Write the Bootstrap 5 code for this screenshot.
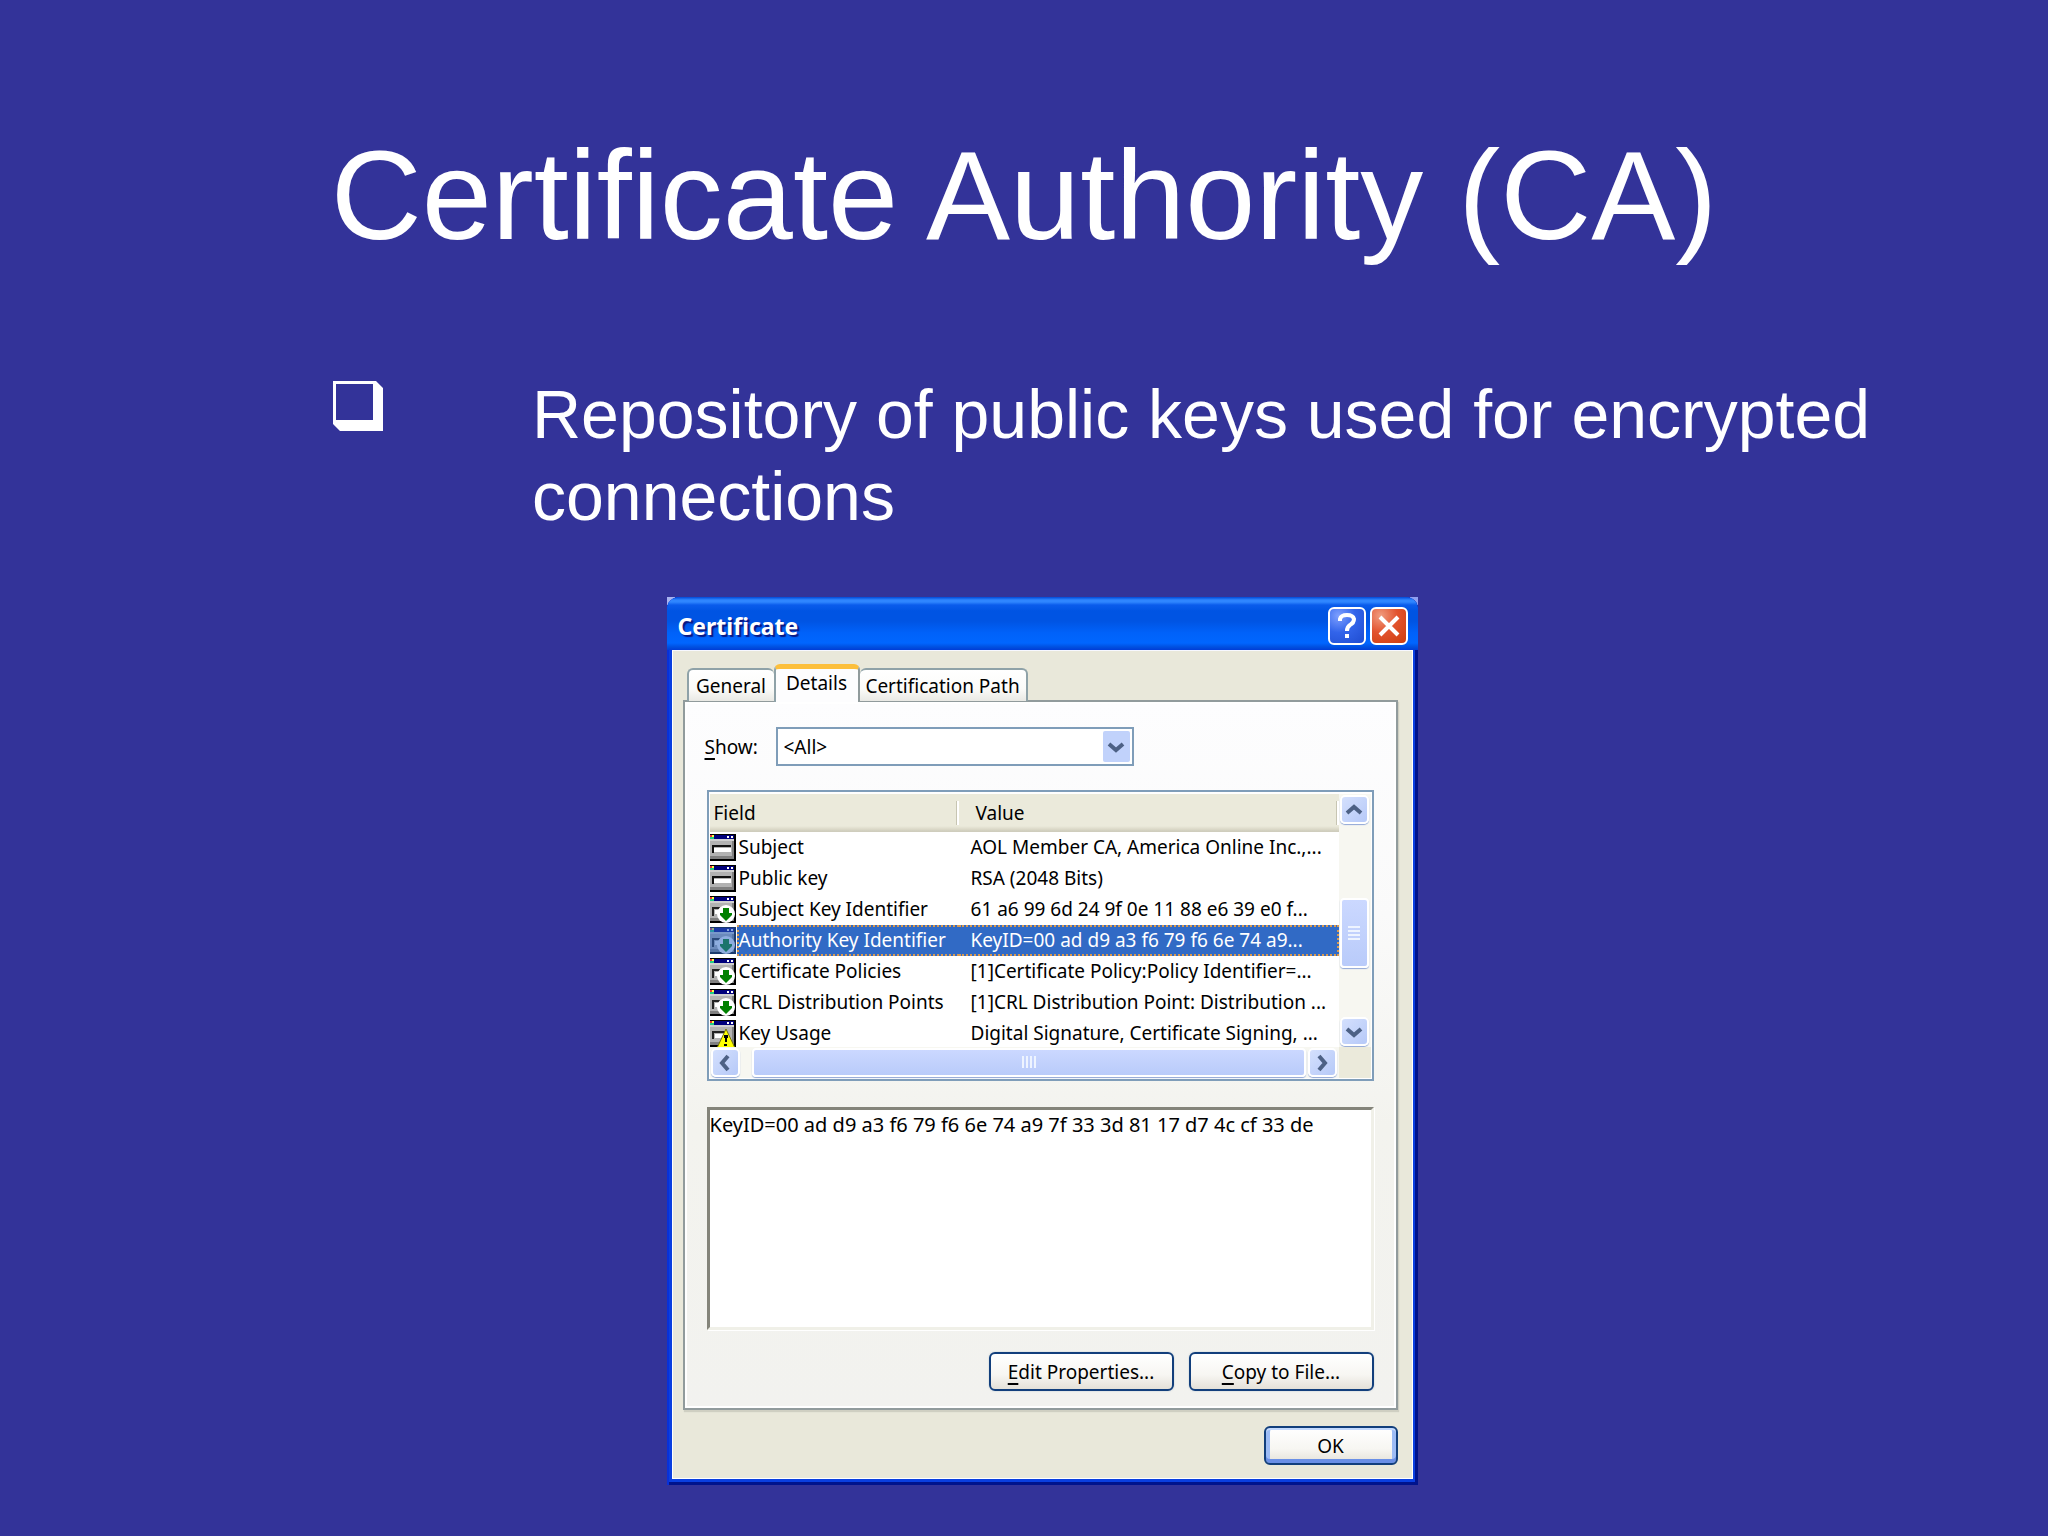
<!DOCTYPE html>
<html lang="en">
<head>
<meta charset="utf-8">
<meta name="viewport" content="width=device-width, initial-scale=1">
<title>Certificate Authority (CA)</title>
<link rel="stylesheet" href="https://cdn.jsdelivr.net/npm/bootstrap@5.3.0/dist/css/bootstrap.min.css">
<style>
body { background: #333399; color: #fff; font-family: "Liberation Sans", Arial, sans-serif; }
.slide { padding: 124px 120px 50px; }
.slide-title { font-size: 126px; line-height: 144px; font-weight: 400; margin-bottom: 105px; }
.slide-points { padding-left: 213px; font-size: 68px; line-height: 82px; margin-bottom: 60px; }
.point-mark { width: 199px; padding-top: 8px; line-height: 1; }
.dialog-area { padding-left: 36px; }

/* dialog frame */
.xp-window { width: 751px; background: #0a3fe0; border-radius: 12px 12px 0 0; padding: 0 5px 6px 5px; position: relative;
  box-shadow: inset 2px 0 #0831d9, inset -3px -3px #00138c; color: #000; font-family: "Noto Sans", Tahoma, sans-serif; font-size: 19px; line-height: 24px; }
.xp-window::before { content: ""; position: absolute; inset: 0 0 auto; height: 10px; z-index: -1;
  background: linear-gradient(#a9b4f0, #a9b4f0) 0 0 / 8px 8px no-repeat, linear-gradient(#8f9ff0, #8f9ff0) 100% 0 / 8px 8px no-repeat; }
.xp-titlebar { height: 53px; margin: 0 -5px; padding: 4px 10px 0 11px; border-radius: 12px 12px 0 0;
  background: linear-gradient(#0048d8 0, #2f86ff 3px, #2f86ff 5px, #0a5cec 8px, #0054e3 14px, #0054e3 24px, #0062fa 36px, #0066ff 46px, #0050e0 50px, #003dd7 53px); }
.xp-caption { font-family: "Noto Sans", "Trebuchet MS", sans-serif; font-size: 23px; font-weight: 700; color: #fff; text-shadow: 2px 2px 1px #0a1883; }
.xp-cap-btn { width: 38px; height: 38px; padding: 0; border: 2px solid #fff; border-radius: 6px; color: #fff; background: radial-gradient(circle at 25% 20%, #7ea0ff, #3264ea 45%, #1f4cd0); }
.xp-cap-btn.is-close { background: radial-gradient(circle at 25% 20%, #f09c80, #e2532e 45%, #cc3c0c); }
.xp-client { background: #e9e8da; border: 1px solid #fff; border-top-color: #f7f8ff; padding: 12px 14px 13px 10px; }

/* tabs */
.xp-tabs { padding-left: 4px; height: 38px; margin-bottom: -1px; position: relative; }
.xp-tab { height: 33px; border: 2px solid #8fa2a8; border-bottom: 0; border-radius: 6px 6px 0 0; background: linear-gradient(#fff, #fbfbf9 60%, #e9e9e4); padding: 0; color: #000; }
.xp-tab.tab-general { width: 87px; border-right: 0; }
.xp-tab.tab-details { width: 86px; height: 38px; border-top: 5px solid #fcbf3c; border-right-color: #919b9c; background: #fdfdfe; margin-bottom: -1px; padding-bottom: 5px; }
.xp-tab.tab-path { width: 168px; border-left: 0; }
.xp-panel { border: 2px solid #919b9c; box-shadow: inset 0 0 0 2px #fff, 1px 2px 1px #cfcfc2; background: linear-gradient(#fdfdfe, #fafafa 30%, #f3f3ee 60%, #f2f2ef); padding: 25px 22px 17px; }

.xp-show { width: 71px; margin-left: -2px; }
.xp-select-box { width: 358px; position: relative; }
.xp-select { width: 100%; height: 39px; border: 2px solid #7f9db9; border-radius: 0; background: #fff; color: #000; appearance: none; padding: 0 6px; }
.xp-select-box svg { position: absolute; right: 4px; top: 4px; pointer-events: none; }

/* field list */
.xp-list { border: 2px solid #7f9db9; background: #fff; margin-top: 24px; height: 291px; padding: 2px 1px 1px; }
.list-view { width: 629px; height: 253px; overflow: hidden; }
.field-table { width: 629px; table-layout: fixed; border-collapse: separate; border-spacing: 0; }
.field-table th { height: 38px; font-weight: 400; padding: 0 0 0 4px; background: linear-gradient(#ebeadb 32px, #dcdac9 35px, #cfcdbd 37px); position: relative; }
.field-table th::after { content: ""; position: absolute; right: 0; top: 7px; height: 24px; width: 3px; background: #c7c5b2; border-right: 2px solid #fff; }
.field-table th:last-child { padding-left: 17px; }
.field-table td { height: 31px; padding: 0 0 0 2px; white-space: nowrap; line-height: 27px; border: solid transparent; border-width: 2px 0; }
.field-table td:first-child { padding: 0; border: 0; }
.field-table td svg { display: block; }
.field-table td:last-child { padding-left: 12px; }
.field-table .is-selected td + td { background: #316ac5; color: #fff; border-color: #d89a50; border-style: dotted; }
.field-table .is-selected td:first-child + td { border-left-width: 2px; padding-left: 0; }
.field-table .is-selected td:last-child { border-right-width: 2px; }
.v-scroll { width: 32px; padding: 1px 0 1px 1px; background: #f7f7f1; }
.h-scroll { width: 629px; height: 31px; padding: 1px 2px 1px 1px; background: #f7f7f1; }
.scroll-corner { width: 32px; background: #ebeadb; }
.scroll-btn { width: 29px; height: 29px; padding: 0; border: 2px solid #fff; border-radius: 5px; background: linear-gradient(135deg, #d4e0fd, #b6c9f8); box-shadow: 0 1px 1px #8fa6d6; }
.scroll-btn svg, .scroll-thumb svg { display: block; margin: auto; }
.scroll-thumb { background: linear-gradient(#cbd8ff, #b9cbfa); border: 2px solid #fff; border-radius: 4px; box-shadow: 0 1px 1px #8fa6d6; }
.v-scroll .scroll-thumb { width: 29px; height: 70px; }
.h-scroll .scroll-thumb { height: 29px; margin-left: 12px; margin-right: 2px; }

.xp-detail { display: block; width: 100%; height: 223px; margin-top: 26px; border: 3px solid; border-color: #84847a #f0f0e8 #f0f0e8 #84847a; box-shadow: 1px 1px #fff; background: #fff; color: #000; resize: none; padding: 1px 0; outline: 0; border-radius: 0; font-size: 20px; line-height: 28px; }
.xp-btn { height: 39px; width: 185px; border: 2px solid #123f7c; border-radius: 6px; background: linear-gradient(#fff, #f7f6f2 60%, #e4e1d8); color: #000; padding: 0; box-shadow: 0 0 1px 1px #e2e6e6; }
.xp-btn.is-default { width: 134px; box-shadow: inset 0 2px #c4daff, inset 0 -4px #6a8fe6, inset 4px 0 #9dbcf5, inset -4px 0 #9dbcf5; }
.xp-actions { margin-top: 22px; gap: 15px; }
u { text-underline-offset: 4px; text-decoration-thickness: 2px; text-decoration-skip-ink: none; }
</style>
</head>
<body>
<svg width="0" height="0" class="d-block" aria-hidden="true">
  <defs>
    <g id="win-frame">
      <path fill="#b2b2b2" d="M0 0h26v27H0z"/>
      <path fill="#000" d="M0 0h26v1H0zM24 0h2v27h-2zM0 25h26v2H0z"/>
      <path fill="#00007c" d="M4 1h20v4H4z"/>
      <path fill="#e33" d="M0 1h2v2H0z"/><path fill="#ff4" d="M2 1h2v2H2z"/><path fill="#2c8" d="M0 3h4v2H0z"/>
      <path fill="#fff" d="M17 2h2v2h-2zM21 2h2v2h-2z"/>
      <path fill="#d0d0d0" d="M0 5h24v2H0z"/><path fill="#808080" d="M0 22h24v3H0zM22 7h2v17h-2z"/>
    </g>
    <g id="win-plain">
      <use href="#win-frame"/>
      <path fill="#111" d="M2 11h19v2H4v6H2z"/><path fill="#fff" d="M4 14h17v4H4z"/>
    </g>
    <g id="win-down">
      <use href="#win-frame"/>
      <path fill="#222" d="M2 11h8v2H4v7H2z"/><path fill="#fff" d="M5 14h3v4H5z"/>
      <circle cx="16" cy="18" r="9" fill="#fff"/>
      <path fill="#008000" d="M13 12h6v5h3v2l-6 6-6-6v-2h3z"/>
    </g>
    <g id="win-warn">
      <use href="#win-frame"/>
      <path fill="#222" d="M2 11h14v2H4v6H2z"/><path fill="#fff" d="M5 14h8v4H5z"/>
      <path fill="#ff0" stroke="#77730a" d="M16 9 25 28H7z"/>
      <path fill="#000" d="M14 15h4v3h-1v4h-2v-4h-1zM14 24h3v2h-3z"/>
    </g>
    <path id="chev-down" fill="none" stroke="#4d6185" stroke-width="4" d="M2 3l7 6 7-6"/>
  </defs>
</svg>

<main class="slide">
  <h1 class="slide-title text-center">Certificate Authority (CA)</h1>
  <ul class="slide-points list-unstyled">
    <li class="d-flex">
      <span class="point-mark flex-shrink-0" aria-hidden="true">
        <svg class="d-block" width="50" height="50" viewBox="0 0 50 50"><path fill="#fff" fill-rule="evenodd" d="M0 0h43l7 7v43H7l-7-7zM3 3v36h37V3z"/></svg>
      </span>
      <span>Repository of public keys used for encrypted connections</span>
    </li>
  </ul>

  <div class="dialog-area d-flex justify-content-center">
    <section class="xp-window" role="dialog" aria-labelledby="dlg-title">
      <header class="xp-titlebar d-flex align-items-center">
        <span class="xp-caption me-auto" id="dlg-title">Certificate</span>
        <button type="button" class="xp-cap-btn me-1" aria-label="Help">
          <svg class="d-block m-auto" width="28" height="30" viewBox="0 0 28 30"><path fill="none" stroke="#fff" stroke-width="4" d="M7 10V8q1-4 7-4t7 4q0 4-4 6-3 2-3 6"/><path fill="#fff" d="M12 23h4v4h-4z"/></svg>
        </button>
        <button type="button" class="xp-cap-btn is-close" aria-label="Close">
          <svg class="d-block m-auto" width="28" height="28" viewBox="0 0 28 28"><path stroke="#fff" stroke-width="4" d="M5 5l18 18M23 5L5 23"/></svg>
        </button>
      </header>

      <div class="xp-client">
        <div class="xp-tabs d-flex align-items-end" role="tablist">
          <button type="button" class="xp-tab tab-general" role="tab">General</button>
          <button type="button" class="xp-tab tab-details" role="tab" aria-selected="true">Details</button>
          <button type="button" class="xp-tab tab-path" role="tab">Certification Path</button>
        </div>

        <div class="xp-panel" role="tabpanel">
          <div class="d-flex align-items-center">
            <label class="xp-show" for="show"><u>S</u>how:</label>
            <div class="xp-select-box">
              <select class="xp-select" id="show"><option>&lt;All&gt;</option></select>
              <svg width="27" height="31" viewBox="0 0 27 31" aria-hidden="true"><rect width="27" height="31" rx="2" fill="#c1d2fb"/><use href="#chev-down" x="4" y="10"/></svg>
            </div>
          </div>

          <div class="xp-list">
            <div class="d-flex">
              <div class="list-view">
                <table class="field-table">
                  <colgroup><col style="width:27px"><col style="width:222px"><col></colgroup>
                  <thead><tr><th colspan="2">Field</th><th>Value</th></tr></thead>
                  <tbody>
                    <tr><td><svg width="26" height="27"><use href="#win-plain"/></svg></td><td>Subject</td><td>AOL Member CA, America Online Inc.,...</td></tr>
                    <tr><td><svg width="26" height="27"><use href="#win-plain"/></svg></td><td>Public key</td><td>RSA (2048 Bits)</td></tr>
                    <tr><td><svg width="26" height="27"><use href="#win-down"/></svg></td><td>Subject Key Identifier</td><td>61 a6 99 6d 24 9f 0e 11 88 e6 39 e0 f...</td></tr>
                    <tr class="is-selected"><td><svg width="26" height="27"><use href="#win-down"/><path fill="#316ac5" fill-opacity=".55" d="M0 0h26v27H0z"/></svg></td><td>Authority Key Identifier</td><td>KeyID=00 ad d9 a3 f6 79 f6 6e 74 a9...</td></tr>
                    <tr><td><svg width="26" height="27"><use href="#win-down"/></svg></td><td>Certificate Policies</td><td>[1]Certificate Policy:Policy Identifier=...</td></tr>
                    <tr><td><svg width="26" height="27"><use href="#win-down"/></svg></td><td>CRL Distribution Points</td><td>[1]CRL Distribution Point: Distribution ...</td></tr>
                    <tr><td><svg width="26" height="27"><use href="#win-warn"/></svg></td><td>Key Usage</td><td>Digital Signature, Certificate Signing, ...</td></tr>
                  </tbody>
                </table>
              </div>
              <div class="v-scroll d-flex flex-column justify-content-between">
                <button type="button" class="scroll-btn" aria-label="Scroll up"><svg width="18" height="12"><use href="#chev-down" transform="matrix(1 0 0 -1 0 12)"/></svg></button>
                <div class="scroll-thumb d-flex align-items-center mt-4"><svg width="13" height="14"><path stroke="#eef4ff" stroke-width="2" d="M0 1h12M0 5h12M0 9h12M0 13h12"/></svg></div>
                <button type="button" class="scroll-btn" aria-label="Scroll down"><svg width="18" height="12"><use href="#chev-down"/></svg></button>
              </div>
            </div>
            <div class="d-flex">
              <div class="h-scroll d-flex">
                <button type="button" class="scroll-btn" aria-label="Scroll left"><svg width="12" height="18"><use href="#chev-down" transform="matrix(0 1 -1 0 12 0)"/></svg></button>
                <div class="scroll-thumb flex-grow-1 d-flex align-items-center"><svg width="14" height="13"><path stroke="#eef4ff" stroke-width="2" d="M1 0v12M5 0v12M9 0v12M13 0v12"/></svg></div>
                <button type="button" class="scroll-btn" aria-label="Scroll right"><svg width="12" height="18"><use href="#chev-down" transform="matrix(0 1 1 0 0 0)"/></svg></button>
              </div>
              <div class="scroll-corner"></div>
            </div>
          </div>

          <textarea class="xp-detail" aria-label="Field value" readonly>KeyID=00 ad d9 a3 f6 79 f6 6e 74 a9 7f 33 3d 81 17 d7 4c cf 33 de</textarea>

          <div class="xp-actions d-flex justify-content-end">
            <button type="button" class="xp-btn"><u>E</u>dit Properties...</button>
            <button type="button" class="xp-btn"><u>C</u>opy to File...</button>
          </div>
        </div>

        <div class="d-flex justify-content-end mt-3">
          <button type="button" class="xp-btn is-default">OK</button>
        </div>
      </div>
    </section>
  </div>
</main>
<script src="https://cdn.jsdelivr.net/npm/bootstrap@5.3.0/dist/js/bootstrap.bundle.min.js"></script>
</body>
</html>
